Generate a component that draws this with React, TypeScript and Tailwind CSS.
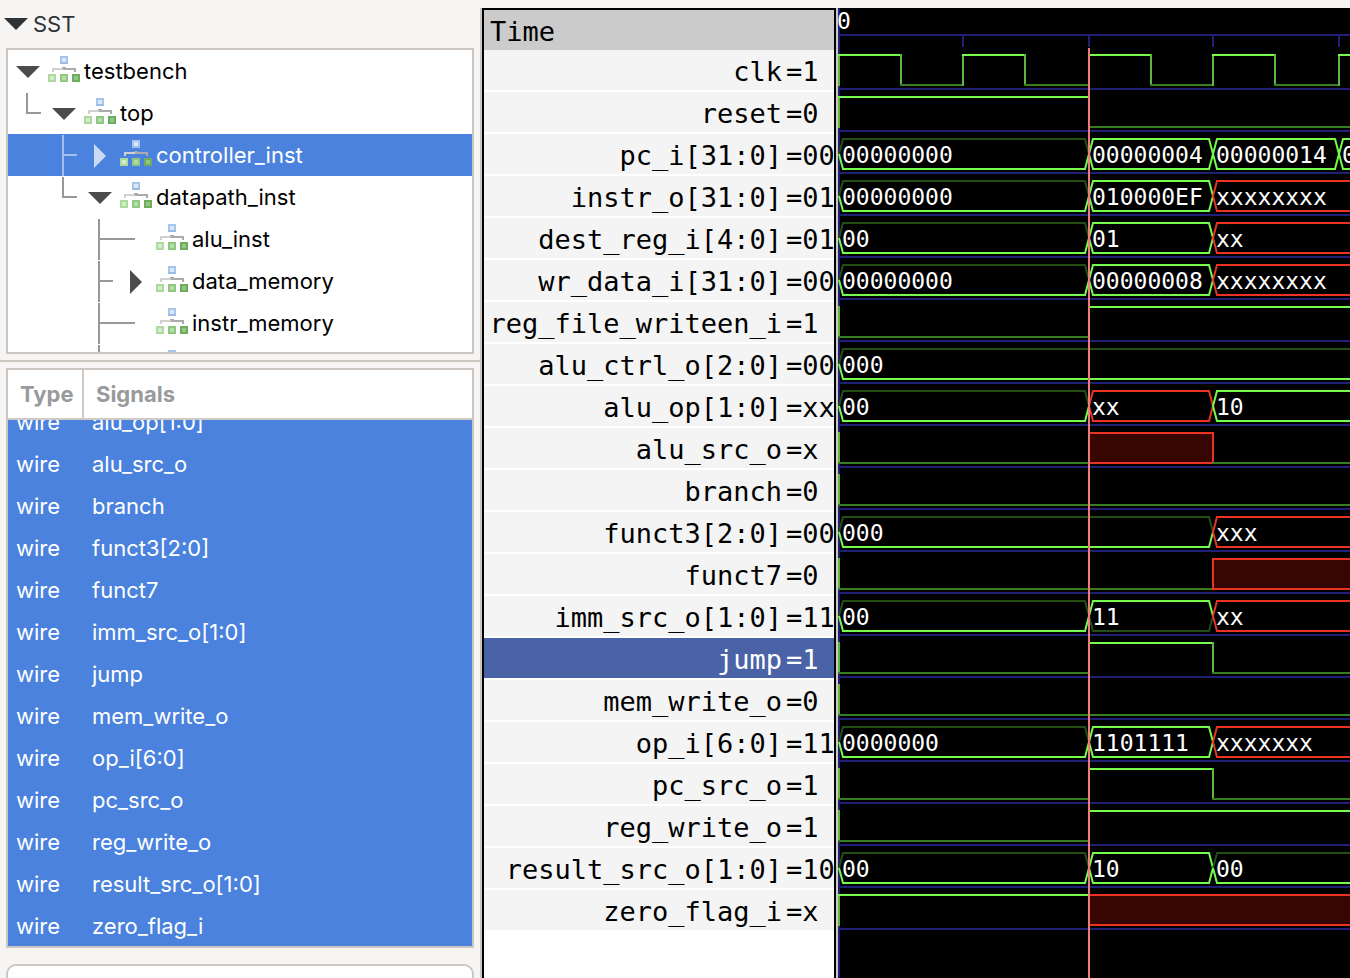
import { useLayoutEffect, useRef } from "react";
import type { ReactNode } from "react";

const GREEN = "#75fb4c";
const EDGE_GREEN = "#5cb83c";
const LOW_GREEN = "#377d22";
const DIM_GREEN = "#234f14";
const RED = "#ea3323";
const RED_FILL = "#370502";
const GRID = "#1f1f75";
const FAR = 4000;

type TreeNode = {
  name: string;
  level: number;
  arrow?: "down" | "right";
  guide?: "elbow" | "tee";
  selected?: boolean;
};

const tree: TreeNode[] = [
  { name: "testbench", level: 0, arrow: "down" },
  { name: "top", level: 1, arrow: "down", guide: "elbow" },
  { name: "controller_inst", level: 2, arrow: "right", guide: "tee", selected: true },
  { name: "datapath_inst", level: 2, arrow: "down", guide: "elbow" },
  { name: "alu_inst", level: 3, guide: "tee" },
  { name: "data_memory", level: 3, arrow: "right", guide: "tee" },
  { name: "instr_memory", level: 3, guide: "tee" },
  { name: "", level: 3, guide: "tee" },
];

const signals = [
  "alu_op[1:0]",
  "alu_src_o",
  "branch",
  "funct3[2:0]",
  "funct7",
  "imm_src_o[1:0]",
  "jump",
  "mem_write_o",
  "op_i[6:0]",
  "pc_src_o",
  "reg_write_o",
  "result_src_o[1:0]",
  "zero_flag_i",
];

type Level = { at: number; v: "0" | "1" | "x" };
type Bus = { at: number; text: string };
type Trace = {
  name: string;
  value: string;
  selected?: boolean;
  levels?: Level[];
  bus?: Bus[];
};

const T0 = 1;
const T1 = 251;
const T2 = 375;
const T3 = 501;

const clock: Level[] = [
  { at: 1, v: "1" },
  { at: 63, v: "0" },
  { at: 125, v: "1" },
  { at: 187, v: "0" },
  { at: 251, v: "1" },
  { at: 313, v: "0" },
  { at: 375, v: "1" },
  { at: 437, v: "0" },
  { at: 501, v: "1" },
  { at: 563, v: "0" },
  { at: 625, v: "1" },
];

const traces: Trace[] = [
  { name: "clk", value: "1", levels: clock },
  { name: "reset", value: "0", levels: [{ at: T0, v: "1" }, { at: T1, v: "0" }] },
  {
    name: "pc_i[31:0]",
    value: "00000004",
    bus: [
      { at: T0, text: "00000000" },
      { at: T1, text: "00000004" },
      { at: T2, text: "00000014" },
      { at: T3, text: "00000018" },
    ],
  },
  {
    name: "instr_o[31:0]",
    value: "010000EF",
    bus: [
      { at: T0, text: "00000000" },
      { at: T1, text: "010000EF" },
      { at: T2, text: "xxxxxxxx" },
    ],
  },
  {
    name: "dest_reg_i[4:0]",
    value: "01",
    bus: [
      { at: T0, text: "00" },
      { at: T1, text: "01" },
      { at: T2, text: "xx" },
    ],
  },
  {
    name: "wr_data_i[31:0]",
    value: "00000008",
    bus: [
      { at: T0, text: "00000000" },
      { at: T1, text: "00000008" },
      { at: T2, text: "xxxxxxxx" },
    ],
  },
  { name: "reg_file_writeen_i", value: "1", levels: [{ at: T0, v: "0" }, { at: T1, v: "1" }] },
  { name: "alu_ctrl_o[2:0]", value: "000", bus: [{ at: T0, text: "000" }] },
  {
    name: "alu_op[1:0]",
    value: "xx",
    bus: [
      { at: T0, text: "00" },
      { at: T1, text: "xx" },
      { at: T2, text: "10" },
    ],
  },
  {
    name: "alu_src_o",
    value: "x",
    levels: [{ at: T0, v: "0" }, { at: T1, v: "x" }, { at: T2, v: "0" }],
  },
  { name: "branch", value: "0", levels: [{ at: T0, v: "0" }] },
  {
    name: "funct3[2:0]",
    value: "000",
    bus: [
      { at: T0, text: "000" },
      { at: T2, text: "xxx" },
    ],
  },
  { name: "funct7", value: "0", levels: [{ at: T0, v: "0" }, { at: T2, v: "x" }] },
  {
    name: "imm_src_o[1:0]",
    value: "11",
    bus: [
      { at: T0, text: "00" },
      { at: T1, text: "11" },
      { at: T2, text: "xx" },
    ],
  },
  {
    name: "jump",
    value: "1",
    selected: true,
    levels: [{ at: T0, v: "0" }, { at: T1, v: "1" }, { at: T2, v: "0" }],
  },
  { name: "mem_write_o", value: "0", levels: [{ at: T0, v: "0" }] },
  {
    name: "op_i[6:0]",
    value: "1101111",
    bus: [
      { at: T0, text: "0000000" },
      { at: T1, text: "1101111" },
      { at: T2, text: "xxxxxxx" },
    ],
  },
  {
    name: "pc_src_o",
    value: "1",
    levels: [{ at: T0, v: "0" }, { at: T1, v: "1" }, { at: T2, v: "0" }],
  },
  { name: "reg_write_o", value: "1", levels: [{ at: T0, v: "0" }, { at: T1, v: "1" }] },
  {
    name: "result_src_o[1:0]",
    value: "10",
    bus: [
      { at: T0, text: "00" },
      { at: T1, text: "10" },
      { at: T2, text: "00" },
    ],
  },
  { name: "zero_flag_i", value: "x", levels: [{ at: T0, v: "1" }, { at: T1, v: "x" }] },
];

function LevelTrace({ levels }: { levels: Level[] }) {
  const parts: ReactNode[] = [];
  levels.forEach((seg, i) => {
    const next = levels[i + 1];
    const end = next ? next.at : FAR;
    if (seg.v === "x") {
      parts.push(
        <rect key={`s${i}`} x={seg.at} y={5} width={end - seg.at} height={30} fill={RED_FILL} stroke={RED} strokeWidth={2} />,
      );
    } else {
      const afterX = i > 0 && levels[i - 1].v === "x";
      if (!afterX) {
        parts.push(<path key={`e${i}`} d={`M${seg.at} 4V36`} stroke={EDGE_GREEN} strokeWidth={2} />);
      }
      const y = seg.v === "1" ? 5 : 35;
      parts.push(
        <path
          key={`s${i}`}
          d={`M${seg.at - 1} ${y}H${end + 1}`}
          stroke={seg.v === "1" ? GREEN : LOW_GREEN}
          strokeWidth={2}
        />,
      );
    }
  });
  return <>{parts}</>;
}

function BusTrace({ bus }: { bus: Bus[] }) {
  return (
    <>
      {bus.map((seg, i) => {
        const next = bus[i + 1];
        const a = seg.at;
        const b = next ? next.at : FAR;
        const unknown = seg.text.includes("x");
        const top = unknown ? RED : /^0+$/.test(seg.text) ? DIM_GREEN : GREEN;
        const bottom = unknown ? RED : /^1+$/.test(seg.text) ? DIM_GREEN : GREEN;
        return (
          <g key={i} fill="none" strokeWidth={2}>
            <path d={`M${a} 20L${a + 4} 5H${b - 4}L${b} 20`} stroke={top} />
            <path d={`M${a} 20L${a + 4} 35H${b - 4}L${b} 20`} stroke={bottom} />
            <text x={a + 3} y={29} fill="#ffffff" stroke="none">
              {seg.text}
            </text>
          </g>
        );
      })}
    </>
  );
}

function HierarchyIcon() {
  return (
    <svg className="block h-[42px] w-8 shrink-0" viewBox="0 0 32 42" fill="none" aria-hidden="true">
      <rect x="13" y="7" width="6" height="6" fill="#d9e7f8" stroke="#a6c6ec" strokeWidth="2" />
      <path d="M12 13H20" stroke="#8fb5e3" strokeWidth="2" opacity=".6" />
      <path d="M14 17.5H18" stroke="#a8a8a8" strokeWidth="1" />
      <path d="M5 22V19H16" stroke="#d0d0d0" strokeWidth="2" />
      <path d="M15 19H27V22" stroke="#ababab" strokeWidth="2" />
      <rect x="1" y="25" width="6" height="6" fill="#d3edc9" stroke="#acd9a0" strokeWidth="2" />
      <rect x="13" y="25" width="6" height="6" fill="#b6ddaa" stroke="#8fc781" strokeWidth="2" />
      <rect x="25" y="25" width="6" height="6" fill="#92c684" stroke="#6cac5c" strokeWidth="2" />
    </svg>
  );
}

function TreeRow({ node }: { node: TreeNode }) {
  const width = 40 + 36 * node.level;
  const cx = 20 + 36 * node.level;
  const gx = 19 + 36 * (node.level - 1);
  const line = node.selected ? "#a3bfee" : "#999999";
  const arrowFill = node.selected ? "#c9daf5" : "#4c4c4c";
  return (
    <li
      className={
        node.selected
          ? "flex h-[42px] shrink-0 items-center bg-[#4a82dd] text-white"
          : "flex h-[42px] shrink-0 items-center text-black"
      }
    >
      <svg className="block shrink-0" width={width} height={42} fill="none" aria-hidden="true">
        {node.guide && (
          <path
            d={`M${gx} 1V${node.guide === "tee" ? 42 : 22}M${gx} 21H${node.arrow ? gx + 14 : gx + 36}`}
            stroke={line}
            strokeWidth={2}
          />
        )}
        {node.arrow === "down" && <path d={`M${cx - 12} 16H${cx + 12}L${cx} 28Z`} fill={arrowFill} />}
        {node.arrow === "right" && <path d={`M${cx - 6} 10V34L${cx + 6} 22Z`} fill={arrowFill} />}
      </svg>
      <HierarchyIcon />
      <span className="pl-1 leading-10">{node.name}</span>
    </li>
  );
}

function SignalTable() {
  const box = useRef<HTMLDivElement>(null);
  useLayoutEffect(() => {
    if (box.current) box.current.scrollTop = box.current.scrollHeight;
  }, []);
  return (
    <div ref={box} className="mx-[6px] min-h-0 flex-1 overflow-hidden border-2 border-[#cbc6c1] bg-white">
      <table className="w-full table-fixed border-separate border-spacing-0 text-left">
        <thead className="sticky top-0 bg-white text-[#989a9b]">
          <tr className="h-[50px]">
            <th scope="col" className="w-[76px] border-r-2 border-b-2 border-[#cfcac5] p-0 pl-3 font-bold">
              Type
            </th>
            <th scope="col" className="border-b-2 border-[#cfcac5] p-0 pl-3 font-bold">
              Signals
            </th>
          </tr>
        </thead>
        <tbody className="bg-[#4a82dd] text-white">
          {signals.map((name) => (
            <tr key={name} className="h-[42px]">
              <td className="p-0 pt-[2px] pl-2">wire</td>
              <td className="p-0 pt-[2px] pl-2">{name}</td>
            </tr>
          ))}
        </tbody>
      </table>
    </div>
  );
}

export default function App() {
  return (
    <div className="flex h-screen overflow-hidden bg-[#f6f5f3] pt-2 text-black">
      <aside className="flex w-[482px] shrink-0 flex-col border-r-2 border-[#cbc6c0] font-['Inter','Roboto',sans-serif] text-[22px]">
        <button type="button" className="flex h-10 shrink-0 items-center gap-[5px] pb-2 pl-1 text-[#2e3436]">
          <svg className="h-3 w-6" viewBox="0 0 24 12" fill="currentColor" aria-hidden="true">
            <path d="M0 0H24L12 12Z" />
          </svg>
          SST
        </button>
        <ul className="mx-[6px] flex h-[306px] shrink-0 flex-col overflow-hidden border-2 border-[#cbc6c1] bg-white">
          {tree.map((node, i) => (
            <TreeRow key={i} node={node} />
          ))}
        </ul>
        <hr className="my-[6px] shrink-0 border-t-2 border-[#cdc7c2]" />
        <SignalTable />
        <div className="mx-[6px] mt-4 h-[14px] shrink-0 overflow-hidden">
          <input
            type="text"
            aria-label="Filter"
            className="h-14 w-full rounded-[10px] border-2 border-[#cbc8c4] bg-white px-3 outline-none"
          />
        </div>
      </aside>

      <section className="w-[354px] shrink-0 overflow-hidden border-2 border-b-0 border-black bg-white font-['DejaVu_Sans_Mono',monospace] text-[27px]">
        <h2 className="h-10 bg-[#cbcbcb] pt-[2px] pl-[6px] leading-10">Time</h2>
        <ul>
          {traces.map((t) => (
            <li
              key={t.name}
              className={
                t.selected
                  ? "flex h-[42px] justify-end gap-1 border-b-2 border-white bg-[#4a63a7] text-white"
                  : "flex h-[42px] justify-end gap-1 border-b-2 border-white bg-[#f4f4f4]"
              }
            >
              <span className="pt-[2px] leading-10">{t.name}</span>
              <span className="w-12 overflow-hidden pt-[2px] leading-10">={t.value.slice(0, 2)}</span>
            </li>
          ))}
        </ul>
      </section>

      <main className="relative min-w-0 flex-1 overflow-hidden border-l-2 border-[#cdc8c4] bg-black font-['DejaVu_Sans_Mono',monospace] text-[23px]">
        <svg className="block h-[42px] w-full" fill="none" strokeWidth={2}>
          <path d={`M1 0V42M0 27H${FAR}M125 28V39M251 28V39M375 28V39M501 28V39`} stroke={GRID} />
          <text x={-1} y={21} fill="#ffffff">
            0
          </text>
        </svg>
        {traces.map((t) => (
          <svg key={t.name} className="block h-[42px] w-full" fill="none" strokeWidth={2}>
            <path d={`M1 0V42M0 39H${FAR}`} stroke={GRID} />
            {t.levels && <LevelTrace levels={t.levels} />}
            {t.bus && <BusTrace bus={t.bus} />}
          </svg>
        ))}
        <svg className="block h-[54px] w-full" fill="none" strokeWidth={2}>
          <path d="M1 0V54" stroke={GRID} />
        </svg>
        <div className="absolute top-10 bottom-0 left-[250px] w-[2px] bg-[#ee7c77]" />
      </main>
    </div>
  );
}
